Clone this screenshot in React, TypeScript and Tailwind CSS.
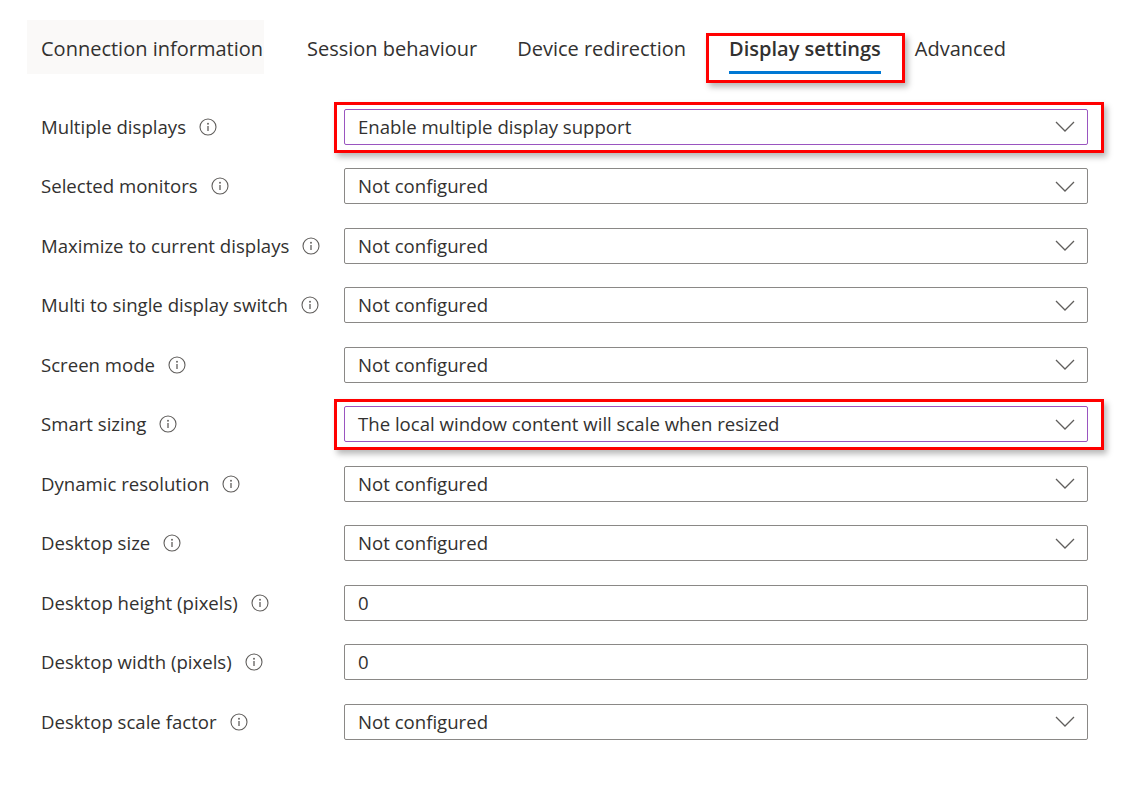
const tabs = [
  "Connection information",
  "Session behaviour",
  "Device redirection",
  "Display settings",
  "Advanced",
];

const tabSpacing = ["pl-[14px] pr-[1px] bg-[#faf9f8]", "ml-[29px] px-[14px]", "ml-[12px] px-[14px]", "ml-[15px] px-[14px]", "ml-[6px] px-[14px]"];

type Row = {
  label: string;
  value: string;
  kind: "select" | "input";
  flagged?: boolean;
};

const rows: Row[] = [
  { label: "Multiple displays", value: "Enable multiple display support", kind: "select", flagged: true },
  { label: "Selected monitors", value: "Not configured", kind: "select" },
  { label: "Maximize to current displays", value: "Not configured", kind: "select" },
  { label: "Multi to single display switch", value: "Not configured", kind: "select" },
  { label: "Screen mode", value: "Not configured", kind: "select" },
  { label: "Smart sizing", value: "The local window content will scale when resized", kind: "select", flagged: true },
  { label: "Dynamic resolution", value: "Not configured", kind: "select" },
  { label: "Desktop size", value: "Not configured", kind: "select" },
  { label: "Desktop height (pixels)", value: "0", kind: "input" },
  { label: "Desktop width (pixels)", value: "0", kind: "input" },
  { label: "Desktop scale factor", value: "Not configured", kind: "select" },
];

const InfoIcon = () => (
  <svg width="18" height="18" viewBox="0 0 18 18" fill="none" className="shrink-0">
    <circle cx="9" cy="9" r="8" stroke="#605e5c" strokeWidth="1.1" />
    <circle cx="9" cy="5.7" r="0.95" fill="#605e5c" />
    <path d="M9 8v5" stroke="#605e5c" strokeWidth="1.3" />
  </svg>
);

const Chevron = () => (
  <svg width="20" height="11" viewBox="0 0 20 11" fill="none" className="shrink-0">
    <path d="M1 1l9 9 9-9" stroke="#605e5c" strokeWidth="1.3" />
  </svg>
);

const RedBox = ({ className }: { className: string }) => (
  <div
    className={`pointer-events-none absolute border-[3px] border-[#ff0000] shadow-[3px_4px_6px_rgba(0,0,0,0.28)] ${className}`}
  />
);

const Field = ({ row }: { row: Row }) => (
  <div className="relative w-[744px]">
    {row.flagged && <RedBox className="-left-[10px] -right-[16px] -top-[7px] -bottom-[8px]" />}
    <div
      className={`flex h-[36px] items-center justify-between rounded-[2px] border bg-white pl-[13px] pr-[12px] ${
        row.flagged ? "border-[#9a55c0]" : "border-[#8a8886]"
      }`}
    >
      <span>{row.value}</span>
      {row.kind === "select" && <Chevron />}
    </div>
  </div>
);

export default function App() {
  return (
    <div
      className="min-h-[794px] w-[1136px] bg-white text-[18.6px] text-[#323130]"
      style={{ fontFamily: '"Segoe UI", "Open Sans", sans-serif' }}
    >
      {/* Tabs */}
      <div className="flex items-center pl-[27px] pt-[20px]">
        {tabs.map((tab, i) => {
          const active = tab === "Display settings";
          return (
            <div key={tab} className={`relative flex h-[54px] items-center pt-[3px] text-[20px] ${tabSpacing[i]}`}>
              <span className={active ? "font-semibold" : ""}>{tab}</span>
              {active && (
                <>
                  <div className="absolute bottom-0 left-[14px] right-[14px] h-[3px] bg-[#0078d4]" />
                  <RedBox className="-left-[9px] -right-[10px] top-[13px] -bottom-[9px]" />
                </>
              )}
            </div>
          );
        })}
      </div>

      {/* Settings rows */}
      <div className="mt-[23px] flex flex-col pl-[41px]">
        {rows.map((row) => (
          <div key={row.label} className="flex h-[59.5px] items-center">
            <div className="flex w-[303px] items-center gap-[13px]">
              <span>{row.label}</span>
              <InfoIcon />
            </div>
            <Field row={row} />
          </div>
        ))}
      </div>
    </div>
  );
}
